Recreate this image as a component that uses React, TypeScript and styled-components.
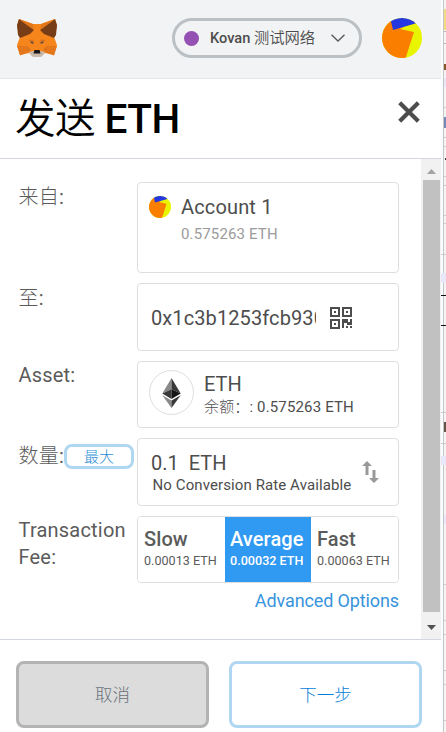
import React from 'react';
import styled, { createGlobalStyle } from 'styled-components';

const GlobalStyle = createGlobalStyle`
  * { box-sizing: border-box; }
  body { margin: 0; background: #fff; overflow: hidden; }
  body, button, input { font-family: Roboto, "Noto Sans CJK SC", sans-serif; }
  svg { display: block; flex: none; }
`;

const Screen = styled.div`
  display: flex;
  width: 446px;
  height: 732px;
  background: #fff;
  overflow: hidden;
`;
const Popup = styled.main`
  width: 441px;
  height: 732px;
  flex: none;
  display: flex;
  flex-direction: column;
  color: #4d4d4d;
`;
const PageEdge = styled.aside`
  width: 5px;
  flex: none;
`;
const Header = styled.header`
  height: 79px;
  flex: none;
  display: flex;
  align-items: center;
  padding: 0 19px 3px 16px;
  background: #f2f3f4;
  border-bottom: 1px solid #e4e7e9;
`;
const NetworkButton = styled.button`
  width: 190px;
  height: 40px;
  margin-left: auto;
  margin-right: 20px;
  padding: 0 14px 0 9px;
  display: flex;
  align-items: center;
  border: 3px solid #bbc0c5;
  border-radius: 20px;
  background: transparent;
  color: #4d4d4d;
`;
const NetworkDot = styled.span`
  width: 15px;
  height: 15px;
  margin-top: 1px;
  border-radius: 50%;
  background: #9550b3;
`;
const NetworkName = styled.span`
  flex: 1;
  margin: -3px 0 0 11px;
  text-align: left;
  font-size: 14.6px;
  font-weight: 500;
  white-space: nowrap;
`;
const Han = styled.span<{ $weight?: number; $size?: number }>`
  font-family: "Noto Sans CJK SC", sans-serif;
  font-weight: ${(p) => p.$weight ?? 300};
  font-size: ${(p) => (p.$size ? `${p.$size}px` : 'inherit')};
`;
const TitleBar = styled.section`
  height: 80px;
  flex: none;
  display: flex;
  justify-content: space-between;
  padding: 0 21px 0 15px;
  border-bottom: 1px solid #d2d8dd;
`;
const Title = styled.h1`
  margin: 0;
  color: #000;
  font-size: 40.5px;
  line-height: 74px;
  letter-spacing: -0.5px;
  font-weight: 500;
  white-space: nowrap;
`;
const CloseButton = styled.button`
  height: 22px;
  margin-top: 22px;
  padding: 0;
  border: 0;
  background: none;
`;
const ScrollArea = styled.section`
  height: 480px;
  flex: none;
  display: flex;
`;
const Form = styled.div`
  width: 421px;
  display: flex;
  flex-direction: column;
  gap: 10px;
  padding: 23px 22px 0 18px;
`;
const Row = styled.div<{ $height: number }>`
  height: ${(p) => p.$height}px;
  display: grid;
  grid-template-columns: 119px 262px;
`;
const Label = styled.div<{ $inline?: boolean; $top?: number }>`
  display: ${(p) => (p.$inline ? 'flex' : 'block')};
  align-items: flex-start;
  padding: ${(p) => p.$top ?? 0}px 0 0 0.5px;
  color: #5b5b5b;
  font-size: 20px;
  line-height: 27px;
  letter-spacing: 0.2px;
  white-space: nowrap;
`;
const MaxButton = styled.button`
  width: 70px;
  height: 25px;
  margin: 3px 0 0 0;
  padding: 0 0 2px;
  border: 3px solid #b0d7f2;
  border-radius: 8px;
  background: #fff;
  color: #2d8ed6;
  font-size: 15px;
  line-height: 17px;
`;
const Card = styled.div<{ $pad: string }>`
  height: 100%;
  display: flex;
  padding: ${(p) => p.$pad};
  border: 1px solid #dedede;
  border-radius: 4px;
  background: #fff;
  overflow: hidden;
`;
const Lines = styled.div`
  display: flex;
  flex-direction: column;
  white-space: nowrap;
`;
const AccountLines = styled(Lines)`
  margin: -1px 0 0 10px;
  letter-spacing: 0.15px;
`;
const AssetLines = styled(Lines)`
  padding-top: 2px;
`;
const AmountLines = styled(Lines)`
  flex: 1;
`;
const Primary = styled.div`
  font-size: 20px;
  line-height: 24px;
  color: #4d4d4d;
`;
const Amount = styled(Primary)`
  display: flex;
  gap: 10px;
`;
const Secondary = styled.div<{ $muted?: boolean }>`
  font-size: 15px;
  line-height: 20px;
  letter-spacing: 0.15px;
  color: ${(p) => (p.$muted ? '#9b9b9b' : '#4d4d4d')};
`;
const AccountBalance = styled(Secondary)`
  margin-top: 5px;
`;
const Conversion = styled(Secondary)`
  margin-left: 1.5px;
  letter-spacing: 0.1px;
`;
const Address = styled.div`
  width: 165px;
  overflow: hidden;
  font-size: 20px;
  line-height: 26px;
  letter-spacing: 0.1px;
`;
const QrSlot = styled.div`
  margin: 2px 0 0 14px;
`;
const SwapSlot = styled.div`
  margin: 10px 6px 0 0;
`;
const TokenCircle = styled.div`
  width: 45px;
  height: 45px;
  display: flex;
  align-items: center;
  justify-content: center;
  border: 1px solid #dedede;
  border-radius: 50%;
  margin-right: 10px;
`;
const FeeGroup = styled.div`
  height: 100%;
  display: grid;
  grid-template-columns: 87px 86px 87px;
  border: 1px solid #dedede;
  border-radius: 4px;
  overflow: hidden;
`;
const FeeOption = styled.button<{ $selected?: boolean }>`
  padding: 8px 0 0 ${(p) => (p.$selected ? 5 : 6)}px;
  display: flex;
  flex-direction: column;
  border: 0;
  text-align: left;
  white-space: nowrap;
  background: ${(p) => (p.$selected ? '#3099f2' : '#fff')};
  color: ${(p) => (p.$selected ? '#fff' : '#5b5b5b')};
  font-weight: ${(p) => (p.$selected ? 500 : 400)};
`;
const FeeName = styled.span`
  font-size: 20px;
  line-height: 28px;
  font-weight: 500;
  letter-spacing: 0.1px;
`;
const FeeAmount = styled.span`
  font-size: 12.6px;
  line-height: 15px;
`;
const Advanced = styled.a`
  align-self: flex-end;
  margin-top: -5px;
  color: #3894dc;
  font-size: 18px;
  line-height: 26px;
  letter-spacing: -0.12px;
  white-space: nowrap;
`;
const Scrollbar = styled.div`
  width: 20px;
  padding: 0 1px 0 2px;
  display: flex;
  flex-direction: column;
  background: #f1f1f1;
`;
const Arrow = styled.div<{ $height: number }>`
  height: ${(p) => p.$height}px;
  padding-top: 3px;
  display: flex;
  align-items: center;
  justify-content: center;
`;
const Thumb = styled.div`
  flex: 1;
  background: #c1c1c1;
`;
const Footer = styled.footer`
  height: 93px;
  display: flex;
  gap: 20px;
  padding: 21px 19px 4px 16px;
  border-top: 1px solid #d2d8dd;
`;
const FooterButton = styled.button<{ $primary?: boolean }>`
  flex: 1;
  height: 67px;
  padding: 0 0 3px;
  border: 3px solid ${(p) => (p.$primary ? '#b0d7f2' : '#b3b3b3')};
  border-radius: 8px;
  background: ${(p) => (p.$primary ? '#fff' : '#dcdcdc')};
  color: ${(p) => (p.$primary ? '#037dd6' : '#6a737d')};
  font-size: 17.5px;
`;

const Fox = () => (
  <svg width="42" height="42" viewBox="0 0 42 42">
    <path d="M3 2L17 7H25L39 2L41 9L38 20L41 28L38 38L29 36L25 39H17L13 36L4 38L1 28L4 20L1 9Z" fill="#f6851b" />
    <path d="M3 2L18 13L14 17L4 21L2 18L1 8ZM39 2L24 13L28 17L38 21L40 18L41 8Z" fill="#763d16" />
    <path d="M3 2L17 7L18 13ZM39 2L25 7L24 13Z" fill="#e2761b" />
    <path d="M1 29H12L13 35L4 38.500ZM41 29H30L29 35L38 38.500Z" fill="#e4761b" />
    <path d="M12 23L17 22.500L18.500 26L16 25ZM30 23L25 22.500L23.500 26L26 25ZM12 30L15 33L12 34ZM30 30L27 33L30 34Z" fill="#d5701f" />
    <path d="M13 35L17 34H25L29 35L26 39.500L24 40H18L16 39.500Z" fill="#c9b9ab" />
    <path d="M14 24.500L17 25L17.500 27L15 26ZM28 24.500L25 25L24.500 27L27 26Z" fill="#4a4a4c" />
    <path d="M18.500 33H23.500L24.500 36.500H17.500Z" fill="#161616" />
  </svg>
);

const Jazzicon = ({ size, id }: { size: number; id: string }) => (
  <svg width={size} height={size} viewBox="0 0 40 40">
    <clipPath id={id}><circle cx="20" cy="20" r="20" /></clipPath>
    <g clipPath={`url(#${id})`}>
      <path d="M0 0H40V40H0Z" fill="#e9f500" />
      <path d="M-2 7L8 3L32 14L23 42H-2Z" fill="#fa7f00" />
      <path d="M18 11L26 7L40 10V16L32 14Z" fill="#e9f500" />
      <path d="M8 -1H34L35 5L11 12Z" fill="#2437e1" />
    </g>
  </svg>
);

const EthLogo = () => (
  <svg width="19" height="30" viewBox="0 0 19 30">
    <path d="M9.500 0L0.300 15.400L9.500 11.200Z" fill="#8a8a8a" />
    <path d="M9.500 0L18.700 15.400L9.500 11.200Z" fill="#393939" />
    <path d="M0.300 15.400L9.500 11.200V20.900Z" fill="#393939" />
    <path d="M18.700 15.400L9.500 11.200V20.900Z" fill="#141414" />
    <path d="M0.300 17.200L9.500 22.600V30Z" fill="#8a8a8a" />
    <path d="M18.700 17.200L9.500 22.600V30Z" fill="#393939" />
  </svg>
);

const QrIcon = () => (
  <svg width="22" height="22" viewBox="0 0 22 22" fill="#4d4d4d">
    <path fillRule="evenodd" d="M0 0H10V10H0ZM2 2V8H8V2ZM12 0H22V10H12ZM14 2V8H20V2ZM0 12H10V22H0ZM2 14V20H8V14Z" />
    <path d="M4 4H6V6H4ZM16 4H18V6H16ZM4 16H6V18H4ZM12 12H18V15H20V12H22V18H17V16H14V21H12ZM16 19H18V21H16ZM20 19H22V21H20Z" />
  </svg>
);

const SwapIcon = () => (
  <svg width="17" height="22" viewBox="0 0 17 22" fill="#999">
    <path d="M5 0L10 5H6.500V14H3.500V5H0ZM12 22L7 17H10.500V9H13.500V17H17Z" />
  </svg>
);

const pageMarks = [
  { x: 3, y: 9, h: 12, c: '#f3db83' }, { x: 3, y: 21, h: 9, c: '#f3db83' },
  { x: 3, y: 31, h: 1, c: '#bbb' }, { x: 3, y: 43, h: 1, c: '#bbb' },
  { x: 3, y: 64, h: 6, c: '#86572d' }, { x: 3, y: 78, h: 9, c: '#e8e8fa' },
  { x: 3, y: 107, h: 1, c: '#ccc' }, { x: 3, y: 117, h: 11, c: '#7688b5' },
  { x: 3, y: 137, h: 1, c: '#ccc' }, { x: 3, y: 146, h: 1, c: '#ccc' },
  { x: 4, y: 158, h: 2, c: '#333' }, { x: 3, y: 176, h: 1, c: '#ccc' },
  { x: 3, y: 185, h: 1, c: '#ccc' }, { x: 3, y: 215, h: 1, c: '#ccc' },
  { x: 3, y: 223, h: 1, c: '#ccc' }, { x: 0, y: 254, h: 1, c: '#ccc' },
  { x: 0, y: 273, h: 10, c: '#e8e8fa' }, { x: 0, y: 295, h: 1, c: '#111' },
  { x: 0, y: 325, h: 1, c: '#111' }, { x: 0, y: 412, h: 1, c: '#ccc' },
  { x: 3, y: 422, h: 10, c: '#655448' }, { x: 0, y: 443, h: 1, c: '#ccc' },
  { x: 0, y: 456, h: 9, c: '#e8e8fa' }, { x: 3, y: 515, h: 9, c: '#e8e8fa' },
  { x: 3, y: 584, h: 1, c: '#ccc' }, { x: 3, y: 620, h: 1, c: '#ccc' },
  { x: 3, y: 634, h: 1, c: '#ccc' }, { x: 3, y: 670, h: 1, c: '#ccc' },
  { x: 3, y: 684, h: 1, c: '#ccc' }, { x: 3, y: 720, h: 1, c: '#ccc' },
];

const fees = [
  { name: 'Slow', amount: '0.00013 ETH' },
  { name: 'Average', amount: '0.00032 ETH', selected: true },
  { name: 'Fast', amount: '0.00063 ETH' },
];

export default function App() {
  return (
    <Screen>
      <GlobalStyle />
      <Popup>
        <Header>
          <Fox />
          <NetworkButton>
            <NetworkDot />
            <NetworkName>Kovan <Han $weight={350} $size={15.3}>测试网络</Han></NetworkName>
            <svg width="14" height="8" viewBox="0 0 14 8" fill="none" stroke="#5b5b5b" strokeWidth="1.400">
              <path d="M0.500 0.700L7 7L13.500 0.700" />
            </svg>
          </NetworkButton>
          <Jazzicon size={40} id="avatar-large" />
        </Header>
        <TitleBar>
          <Title><Han $weight={350}>发送</Han> ETH</Title>
          <CloseButton aria-label="Close">
            <svg width="22" height="22" viewBox="0 0 22 22" stroke="#4d4d4d" strokeWidth="4.200">
              <path d="M1.700 1.700L20.300 20.300M20.300 1.700L1.700 20.300" />
            </svg>
          </CloseButton>
        </TitleBar>
        <ScrollArea>
          <Form>
            <Row $height={91}>
              <Label><Han>来自</Han>:</Label>
              <Card $pad="13px 11px">
                <Jazzicon size={22} id="avatar-small" />
                <AccountLines>
                  <Primary>Account 1</Primary>
                  <AccountBalance $muted>0.575263 ETH</AccountBalance>
                </AccountLines>
              </Card>
            </Row>
            <Row $height={68}>
              <Label><Han>至</Han>:</Label>
              <Card $pad="21px 13px">
                <Address>0x1c3b1253fcb930a5</Address>
                <QrSlot><QrIcon /></QrSlot>
              </Card>
            </Row>
            <Row $height={67}>
              <Label $top={1}>Asset:</Label>
              <Card $pad="8px 11px">
                <TokenCircle><EthLogo /></TokenCircle>
                <AssetLines>
                  <Primary>ETH</Primary>
                  <Secondary><Han>余额：</Han>: 0.575263 ETH</Secondary>
                </AssetLines>
              </Card>
            </Row>
            <Row $height={68}>
              <Label $inline $top={3}><span><Han>数量</Han>:</span><MaxButton><Han>最大</Han></MaxButton></Label>
              <Card $pad="12px 13px">
                <AmountLines>
                  <Amount>0.1<span>ETH</span></Amount>
                  <Conversion>No Conversion Rate Available</Conversion>
                </AmountLines>
                <SwapSlot><SwapIcon /></SwapSlot>
              </Card>
            </Row>
            <Row $height={67}>
              <Label $top={1}>Transaction<br />Fee:</Label>
              <FeeGroup>
                {fees.map((fee) => (
                  <FeeOption key={fee.name} $selected={fee.selected}>
                    <FeeName>{fee.name}</FeeName>
                    <FeeAmount>{fee.amount}</FeeAmount>
                  </FeeOption>
                ))}
              </FeeGroup>
            </Row>
            <Advanced>Advanced Options</Advanced>
          </Form>
          <Scrollbar>
            <Arrow $height={21}><svg width="9" height="5" viewBox="0 0 9 5"><path d="M0 5L4.500 0L9 5Z" fill="#a3a3a3" /></svg></Arrow>
            <Thumb />
            <Arrow $height={27}><svg width="9" height="5" viewBox="0 0 9 5"><path d="M0 0H9L4.500 5Z" fill="#505050" /></svg></Arrow>
          </Scrollbar>
        </ScrollArea>
        <Footer>
          <FooterButton><Han>取消</Han></FooterButton>
          <FooterButton $primary><Han>下一步</Han></FooterButton>
        </Footer>
      </Popup>
      <PageEdge>
        <svg width="5" height="732" viewBox="0 0 5 732" shapeRendering="crispEdges">
          <path d="M2 0H3V732H2Z" fill="#c4c4c4" />
          <path d="M3 0H5V732H3Z" fill="#f5f5f5" />
          {pageMarks.map((m) => <path key={m.y} d={`M${m.x} ${m.y}H5v${m.h}H${m.x}z`} fill={m.c} />)}
        </svg>
      </PageEdge>
    </Screen>
  );
}
